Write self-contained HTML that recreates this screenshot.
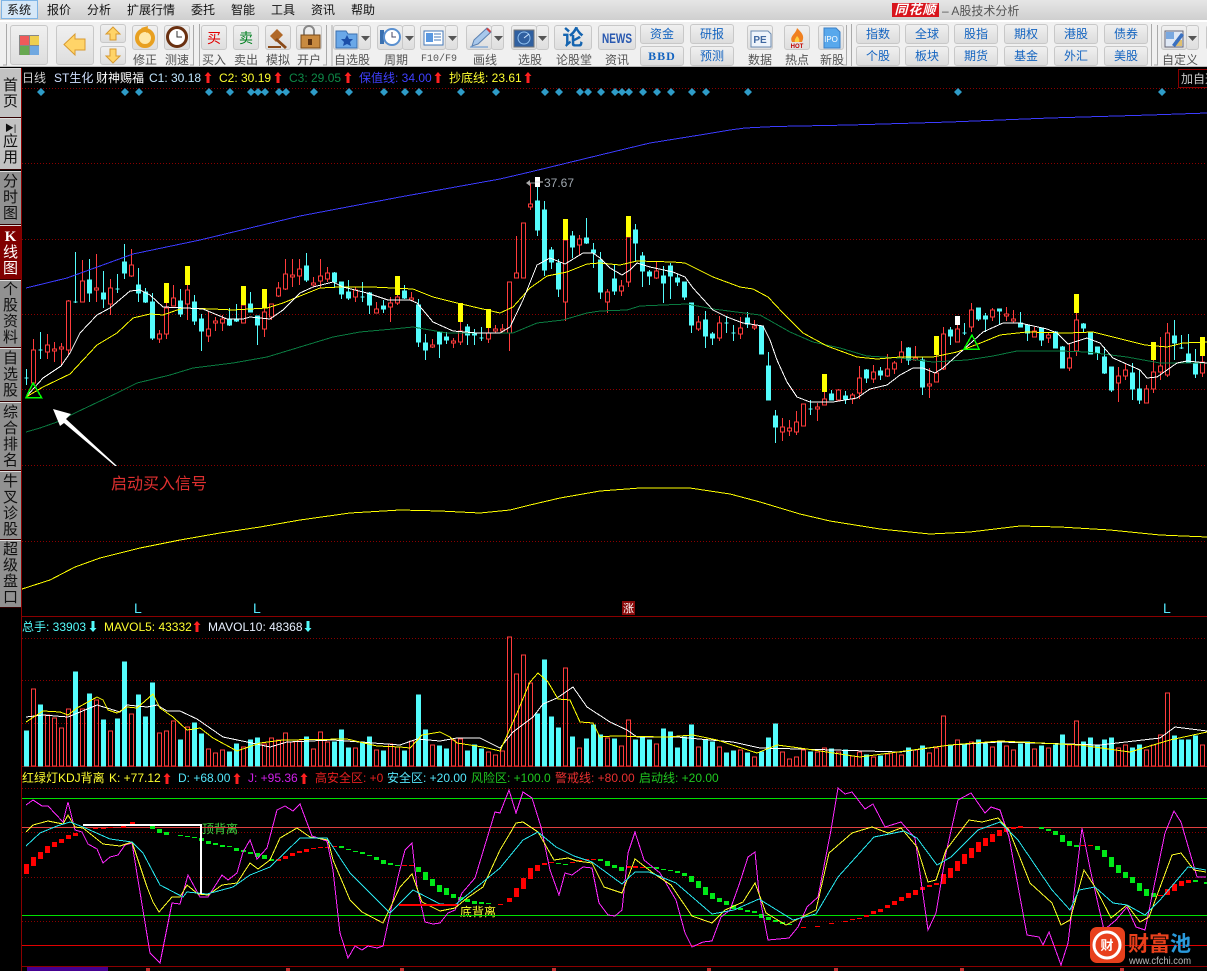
<!DOCTYPE html>
<html><head><meta charset="utf-8"><title>A股技术分析</title>
<style>
*{box-sizing:border-box}
html,body{margin:0;padding:0;width:1207px;height:971px;overflow:hidden;background:#000;font-family:"Liberation Sans","WenQuanYi Zen Hei","Noto Sans CJK SC",sans-serif;font-size:12px}
#menu{position:absolute;left:0;top:0;width:1207px;height:20px;background:linear-gradient(#e6e6e6,#cfcfcf)}
#menu span{position:absolute;top:2px;line-height:16px;color:#111;font-size:12px;white-space:nowrap}
#sys{position:absolute;left:1px;top:0;width:37px;height:19px;background:#d6e8f8;border:1px solid #7fb5e6}
#bar{position:absolute;left:0;top:20px;width:1207px;height:47px;background:#f0f0f0;border-top:2px solid #fff;border-bottom:1px solid #bbb}
.b{position:absolute;border:1px solid #c8c8c8;border-radius:3px;background:linear-gradient(#f0f0f0,#dedede)}
.t{position:absolute;color:#1464c0;text-align:center;font-size:12px;line-height:18px;height:20px;width:44px;border:1px solid #c8c8c8;border-radius:3px;background:linear-gradient(#f0f0f0,#dcdcdc)}
.l{position:absolute;top:53px;height:14px;line-height:14px;color:#555;text-align:center;font-size:12px;white-space:nowrap}
.s{position:absolute;left:0;width:21px;background:#919191;border-bottom:1px solid #300;border-top:1px solid #ddd;color:#111;font-size:15px;line-height:16px;text-align:center;display:flex;flex-direction:column;justify-content:center}
#title{position:absolute;left:942px;top:3px;color:#555;font-size:12px;line-height:16px}
#logo{position:absolute;left:892px;top:3px;width:47px;height:14px;background:#d8141c;color:#fff;font-weight:bold;font-style:italic;font-size:13px;line-height:14px;text-align:center;letter-spacing:1px}
#c{position:absolute;left:0;top:0}
</style></head><body>
<div id="menu"><div id="sys"></div>
<span style="left:7px">系统</span><span style="left:47px">报价</span><span style="left:87px">分析</span><span style="left:127px">扩展行情</span><span style="left:191px">委托</span><span style="left:231px">智能</span><span style="left:271px">工具</span><span style="left:311px">资讯</span><span style="left:351px">帮助</span>
<div id="logo">同花顺</div><div id="title">– A股技术分析</div></div>
<div id="bar"></div>
<div class="b" style="left:10px;top:25px;width:38px;height:40px"></div>
<div class="b" style="left:56px;top:25px;width:38px;height:40px"></div>
<div class="b" style="left:100px;top:24px;width:26px;height:19px"></div>
<div class="b" style="left:100px;top:46px;width:26px;height:19px"></div>
<div class="b" style="left:132px;top:25px;width:26px;height:25px"></div>
<div class="b" style="left:164px;top:25px;width:26px;height:25px"></div>
<div class="b" style="left:201px;top:25px;width:26px;height:25px"></div>
<div class="b" style="left:233px;top:25px;width:26px;height:25px"></div>
<div class="b" style="left:265px;top:25px;width:26px;height:25px"></div>
<div class="b" style="left:296px;top:25px;width:26px;height:25px"></div>
<div class="b" style="left:333px;top:25px;width:26px;height:25px"></div><div class="b" style="left:358px;top:25px;width:13px;height:25px"></div>
<div class="b" style="left:377px;top:25px;width:26px;height:25px"></div><div class="b" style="left:402px;top:25px;width:13px;height:25px"></div>
<div class="b" style="left:420px;top:25px;width:26px;height:25px"></div><div class="b" style="left:445px;top:25px;width:13px;height:25px"></div>
<div class="b" style="left:466px;top:25px;width:26px;height:25px"></div><div class="b" style="left:491px;top:25px;width:13px;height:25px"></div>
<div class="b" style="left:511px;top:25px;width:26px;height:25px"></div><div class="b" style="left:536px;top:25px;width:13px;height:25px"></div>
<div class="b" style="left:554px;top:25px;width:38px;height:25px"></div>
<div class="b" style="left:598px;top:25px;width:38px;height:25px"></div>
<div class="b" style="left:747px;top:25px;width:26px;height:25px"></div>
<div class="b" style="left:784px;top:25px;width:26px;height:25px"></div>
<div class="b" style="left:818px;top:25px;width:26px;height:25px"></div>
<div class="b" style="left:1161px;top:25px;width:26px;height:25px"></div><div class="b" style="left:1186px;top:25px;width:13px;height:25px"></div>
<div class="b" style="left:1206px;top:25px;width:6px;height:25px"></div>
<div class="t" style="left:640px;top:24px">资金</div><div class="t" style="left:640px;top:46px;font-family:'Liberation Serif',serif;font-weight:bold;letter-spacing:1px">BBD</div>
<div class="t" style="left:690px;top:24px">研报</div><div class="t" style="left:690px;top:46px">预测</div>
<div class="t" style="left:856px;top:24px">指数</div><div class="t" style="left:856px;top:46px">个股</div>
<div class="t" style="left:905px;top:24px">全球</div><div class="t" style="left:905px;top:46px">板块</div>
<div class="t" style="left:954px;top:24px">股指</div><div class="t" style="left:954px;top:46px">期货</div>
<div class="t" style="left:1004px;top:24px">期权</div><div class="t" style="left:1004px;top:46px">基金</div>
<div class="t" style="left:1054px;top:24px">港股</div><div class="t" style="left:1054px;top:46px">外汇</div>
<div class="t" style="left:1104px;top:24px">债券</div><div class="t" style="left:1104px;top:46px">美股</div>
<div class="l" style="left:130px;width:30px">修正</div><div class="l" style="left:162px;width:30px">测速</div>
<div class="l" style="left:199px;width:30px">买入</div><div class="l" style="left:231px;width:30px">卖出</div>
<div class="l" style="left:263px;width:30px">模拟</div><div class="l" style="left:294px;width:30px">开户</div>
<div class="l" style="left:332px;width:40px">自选股</div><div class="l" style="left:381px;width:30px">周期</div>
<div class="l" style="left:419px;width:40px;font-family:'Liberation Mono',monospace;font-size:10px">F10/F9</div>
<div class="l" style="left:470px;width:30px">画线</div><div class="l" style="left:515px;width:30px">选股</div>
<div class="l" style="left:554px;width:40px">论股堂</div><div class="l" style="left:602px;width:30px">资讯</div>
<div class="l" style="left:745px;width:30px">数据</div><div class="l" style="left:782px;width:30px">热点</div><div class="l" style="left:817px;width:30px">新股</div>
<div class="l" style="left:1160px;width:40px">自定义</div>
<div class="s" style="top:68px;height:50px;background:#c2c2c2;padding-top:2px">首<br>页</div>
<div class="s" style="top:118px;height:52px;background:#c2c2c2"><span style="font-size:9px;line-height:12px">▶|</span>应<br>用</div>
<div class="s" style="top:171px;height:54px">分<br>时<br>图</div>
<div class="s" style="top:225px;height:55px;background:#800000;color:#fff"><b style="font-family:'Liberation Serif',serif">K</b>线<br>图</div>
<div class="s" style="top:280px;height:68px">个<br>股<br>资<br>料</div>
<div class="s" style="top:348px;height:54px">自<br>选<br>股</div>
<div class="s" style="top:402px;height:69px">综<br>合<br>排<br>名</div>
<div class="s" style="top:471px;height:69px">牛<br>叉<br>诊<br>股</div>
<div class="s" style="top:540px;height:68px">超<br>级<br>盘<br>口</div>
<svg id="c" width="1207" height="971" viewBox="0 0 1207 971" font-family="'Liberation Sans','WenQuanYi Zen Hei','Noto Sans CJK SC',sans-serif" font-size="12">
<!-- toolbar separators -->
<g fill="none" stroke="#aaa"><path d="M6.5 24V65H3M193.5 25V65H190M199.5 24V66M326.5 25V65H323M332 25V66M846.5 25V65H843M851.5 24V66M1151.5 24V66M1157.5 25V65H1154" shape-rendering="crispEdges"/></g>
<!-- toolbar icons -->
<rect x="19" y="35" width="20" height="20" fill="#888"/><rect x="20" y="36" width="9" height="9" fill="#f05a5a"/><rect x="30" y="36" width="9" height="9" fill="#f0cf50"/><rect x="20" y="46" width="9" height="9" fill="#68a850"/><rect x="30" y="46" width="9" height="9" fill="#70a8e0"/>
<path d="M64 44.500L75 34V39H85V50H75V55Z" fill="#ffd468" stroke="#d89a30"/>
<path d="M113 27L120 34H116V40H110V34H106Z" fill="#ffd468" stroke="#d89a30"/><path d="M113 63L120 56H116V49H110V56H106Z" fill="#ffd468" stroke="#d89a30"/>
<circle cx="145" cy="38" r="8" fill="#ffe9a8" stroke="#e8a020" stroke-width="4"/><path d="M141 28l7-2-1 7z" fill="#e8a020"/>
<circle cx="177" cy="37" r="9.500" fill="#fff" stroke="#6a3010" stroke-width="3"/><path d="M177 31V37H182" stroke="#333" fill="none"/>
<text x="214" y="43" font-size="14" fill="#e00000" text-anchor="middle">买</text>
<text x="246" y="43" font-size="14" fill="#008020" text-anchor="middle">卖</text>
<path d="M270 36l7-7 6 6-7 7z" fill="#b06828"/><path d="M277 38l10 9-2 2-10-9z" fill="#8a4a18"/><rect x="268" y="46" width="13" height="2" fill="#8a4a18"/>
<path d="M304 35V31a5 5 0 0 1 10 0V35" fill="none" stroke="#888" stroke-width="2"/><rect x="301" y="35" width="19" height="13" fill="#c88a40" stroke="#7a4a18"/><rect x="308" y="39" width="4" height="6" fill="#5a3010"/>
<path d="M336 31h10l2 3h9v14h-21z" fill="#6aa8e8" stroke="#3a70b0"/><path d="M347 35l2 4h4l-3 3 1 4-4-2-4 2 1-4-3-3h4z" fill="#1c4fa8"/>
<rect x="380" y="30" width="4" height="14" fill="#3a70b0"/><circle cx="392" cy="37" r="8" fill="#fff" stroke="#5a90d0" stroke-width="2"/><path d="M392 32V37H396" stroke="#446" fill="none"/>
<rect x="424" y="31" width="19" height="14" fill="#fff" stroke="#4478b8"/><rect x="426" y="33" width="7" height="9" fill="#5a98e0"/><path d="M434 34h7M434 37h7M434 40h7" stroke="#4478b8"/>
<path d="M472 46l2-6 13-12 4 4-13 12z" fill="#a8c8ec" stroke="#5a80b0"/><path d="M486 29l4 4 1-2-3-3z" fill="#d04040"/><path d="M470 47h18" stroke="#5a90d0"/>
<rect x="514" y="30" width="20" height="17" fill="#3060a0" stroke="#777"/><circle cx="524" cy="38" r="6" fill="none" stroke="#8fc0f0"/><path d="M524 38l5-4" stroke="#cfe6ff"/>
<text x="573" y="45" font-size="21" font-weight="bold" fill="#1464b0" text-anchor="middle">论</text>
<text x="617" y="43" font-size="14" font-weight="bold" fill="#2858b0" text-anchor="middle" textLength="30" lengthAdjust="spacingAndGlyphs">NEWS</text>
<path d="M751 31h17l3 3v13h-20z" fill="#eef4fb" stroke="#6a8ab0"/><text x="760" y="43" font-size="10" font-weight="bold" fill="#4068a0" text-anchor="middle">PE</text>
<path d="M797 28c5 5 8 8 5 14h-10c-3-6 4-8 5-14z" fill="#f08020"/><path d="M797 36c2 2 3 4 2 6h-4c-1-2 1-4 2-6z" fill="#ffd040"/><text x="797" y="48" font-size="6" font-weight="bold" fill="#c00000" text-anchor="middle">HOT</text>
<path d="M824 28h12l4 4v16h-16z" fill="#58a8ec" stroke="#3a80c8"/><text x="831" y="42" font-size="8" fill="#fff" text-anchor="middle">IPO</text>
<rect x="1165" y="31" width="18" height="16" fill="#dfe8f5" stroke="#667"/><path d="M1166 32h8v7h-8z" fill="#7aa8e0"/><path d="M1175 40h7v6h-7z" fill="#e0c070"/><path d="M1172 45l9-12 3 2-9 12z" fill="#3a70c0"/>
<g fill="#555"><path d="M361 36h9l-4.500 5zM405 36h9l-4.500 5zM448 36h9l-4.500 5zM494 36h9l-4.500 5zM538 36h9l-4.500 5zM1188 36h9l-4.500 5z"/></g>

<!-- chart frame -->
<g shape-rendering="crispEdges">
<path d="M21.500 68V971M22 616.500H1207M22 766.500H1207M22 966.500H1207" stroke="#8a0000" fill="none"/>
<path d="M22 88.500H1207M22 163.500H1207M22 239.500H1207M22 314.500H1207M22 389.500H1207M22 465.500H1207M22 541.500H1207M22 638.500H1207M22 680.500H1207M22 723.500H1207M22 788.500H1207M22 832.500H1207M22 877.500H1207M22 921.500H1207" stroke="#8a0000" stroke-dasharray="1 2" fill="none"/>
<rect x="27" y="967" width="81" height="4" fill="#440090"/>
<path d="M146 968h4v3h-4zM286 968h4v3h-4zM400 968h4v3h-4zM552 968h4v3h-4zM707 968h4v3h-4zM834 968h4v3h-4zM960 968h4v3h-4zM1120 968h4v3h-4z" fill="#c03030"/>
<path d="M1178.500 87V69.500H1207" stroke="#8a0000" fill="none"/><path d="M1178 87.500H1207" stroke="#8a0000"/>
</g>
<text x="1181" y="83" fill="#c8c8c8">加自选</text>

<!-- diamonds -->
<path fill="#2e9cc8" d="M41 88l4 4-4 4-4-4zM125 88l4 4-4 4-4-4zM139 88l4 4-4 4-4-4zM209 88l4 4-4 4-4-4zM230 88l4 4-4 4-4-4zM251 88l4 4-4 4-4-4zM258 88l4 4-4 4-4-4zM265 88l4 4-4 4-4-4zM279 88l4 4-4 4-4-4zM286 88l4 4-4 4-4-4zM314 88l4 4-4 4-4-4zM349 88l4 4-4 4-4-4zM384 88l4 4-4 4-4-4zM405 88l4 4-4 4-4-4zM419 88l4 4-4 4-4-4zM461 88l4 4-4 4-4-4zM496 88l4 4-4 4-4-4zM545 88l4 4-4 4-4-4zM559 88l4 4-4 4-4-4zM580 88l4 4-4 4-4-4zM588 88l4 4-4 4-4-4zM601 88l4 4-4 4-4-4zM615 88l4 4-4 4-4-4zM622 88l4 4-4 4-4-4zM629 88l4 4-4 4-4-4zM643 88l4 4-4 4-4-4zM657 88l4 4-4 4-4-4zM671 88l4 4-4 4-4-4zM692 88l4 4-4 4-4-4zM706 88l4 4-4 4-4-4zM748 88l4 4-4 4-4-4zM958 88l4 4-4 4-4-4zM1162 88l4 4-4 4-4-4z"/>

<!-- legend -->
<g>
<text x="22" y="82" fill="#cfcfcf">日线</text><text x="54" y="82" fill="#cfe0ff">ST生化</text><text x="96" y="82" fill="#fff">财神赐福</text>
<text x="149" y="82" fill="#bfe6ff">C1: 30.18</text><text x="219" y="82" fill="#ffff30">C2: 30.19</text><text x="289" y="82" fill="#0e8a48">C3: 29.05</text>
<text x="359" y="82" fill="#4040ff">保值线: 34.00</text><text x="449" y="82" fill="#ffff30">抄底线: 23.61</text>
<text x="22" y="631" fill="#54fcfc">总手: 33903</text><text x="104" y="631" fill="#ffff30">MAVOL5: 43332</text><text x="208" y="631" fill="#e8f0ff">MAVOL10: 48368</text>
<text x="22" y="782" fill="#ffff30">红绿灯KDJ背离</text><text x="109" y="782" fill="#ffff30">K: +77.12</text><text x="178" y="782" fill="#54e8fc">D: +68.00</text><text x="248" y="782" fill="#d020e8">J: +95.36</text><text x="315" y="782" fill="#e82020">高安全区: +0</text><text x="387" y="782" fill="#54e8fc">安全区: +20.00</text><text x="471" y="782" fill="#20c820">风险区: +100.0</text><text x="555" y="782" fill="#e83030">警戒线: +80.00</text><text x="639" y="782" fill="#20c820">启动线: +20.00</text>
<text x="134" y="613" fill="#54e8fc" font-size="14">L</text><text x="253" y="613" fill="#54e8fc" font-size="14">L</text><text x="1163" y="613" fill="#54e8fc" font-size="14">L</text>
<rect x="622" y="601" width="13" height="14" fill="#8a0a0a"/><text x="623" y="612" fill="#fff" font-size="11">涨</text>
<text x="544" y="187" fill="#a0a8b0">37.67</text>
<text x="111" y="489" fill="#e03030" font-size="16">启动买入信号</text>
<text x="202" y="833" fill="#40d840" font-size="12">顶背离</text><text x="460" y="916" fill="#ffff30" font-size="12">底背离</text>
</g>
<path fill="#ff2020" d="M208 72l3.500 4H209.500V83H206.500V76H204.500zM278 72l3.500 4H279.500V83H276.500V76H274.500zM348 72l3.500 4H349.500V83H346.500V76H344.500zM438 72l3.500 4H439.500V83H436.500V76H434.500zM528 72l3.500 4H529.500V83H526.500V76H524.500zM197 621l3.500 4H198.500V632H195.500V625H193.500zM167 773l3.500 4H168.500V784H165.500V777H163.500zM237 773l3.500 4H238.500V784H235.500V777H233.500zM304 773l3.500 4H305.500V784H302.500V777H300.500z"/>
<path fill="#54fcfc" d="M93 632l3.500-4H94.500V621H91.500V628H89.500zM308 632l3.500-4H309.500V621H306.500V628H304.500z"/>

<!-- candles -->
<g shape-rendering="crispEdges">
<path fill="#54fcfc" stroke="#54fcfc" d="M26.500 369V385M24.500 378h4M40.500 332V359M38.500 350h4M75.500 252V303M73.500 302h4M89.500 259V302M87.500 280h4V293h-4zM103.500 271V308M101.500 293h4V299h-4zM117.500 274V293M115.500 289h4M124.500 244V279M122.500 262h4V273h-4zM138.500 268V302M136.500 285h4V293h-4zM145.500 288V303M143.500 292h4V302h-4zM152.500 293V340M150.500 302h4V338h-4zM180.500 289V317M178.500 301h4V314h-4zM194.500 295V325M192.500 302h4V321h-4zM201.500 314V351M199.500 319h4V331h-4zM229.500 308V326M227.500 320h4V325h-4zM236.500 304V322M234.500 319h4V321h-4zM250.500 292V312M248.500 304h4V312h-4zM257.500 316V345M255.500 316h4V325h-4zM306.500 253V282M304.500 266h4V280h-4zM334.500 272V288M332.500 273h4V282h-4zM341.500 282V299M339.500 282h4V294h-4zM348.500 280V300M346.500 292h4V298h-4zM362.500 282V302M360.500 297h4M369.500 292V314M367.500 293h4V305h-4zM383.500 300V313M381.500 306h4V309h-4zM404.500 285V299M402.500 291h4V298h-4zM418.500 299V347M416.500 305h4V342h-4zM425.500 334V360M423.500 343h4V350h-4zM439.500 332V358M437.500 332h4V344h-4zM446.500 332V344M444.500 337h4V340h-4zM467.500 324V345M465.500 327h4V335h-4zM474.500 329V345M472.500 333h4V335h-4zM481.500 327V341M479.500 338h4M537.500 187V236M535.500 201h4V230h-4zM544.500 201V276M542.500 210h4V270h-4zM551.500 247V269M549.500 250h4V262h-4zM558.500 259V297M556.500 263h4V289h-4zM572.500 231V258M570.500 236h4V247h-4zM586.500 218V244M584.500 238h4V243h-4zM593.500 243V268M591.500 250h4V253h-4zM600.500 252V299M598.500 260h4V292h-4zM614.500 264V295M612.500 279h4V291h-4zM635.500 224V262M633.500 230h4V243h-4zM642.500 252V287M640.500 256h4V271h-4zM649.500 270V285M647.500 272h4V276h-4zM663.500 266V303M661.500 276h4V283h-4zM670.500 263V299M668.500 266h4V276h-4zM677.500 274V286M675.500 278h4V282h-4zM684.500 282V300M682.500 282h4V297h-4zM691.500 303V333M689.500 303h4V325h-4zM705.500 311V348M703.500 320h4V336h-4zM712.500 332V345M710.500 334h4V338h-4zM726.500 316V333M724.500 323h4M733.500 325V341M731.500 333h4M747.500 312V328M745.500 318h4V324h-4zM761.500 326V354M759.500 326h4V354h-4zM768.500 352V400M766.500 366h4V400h-4zM775.500 410V443M773.500 416h4V427h-4zM810.500 400V415M808.500 409h4M831.500 390V400M829.500 394h4V400h-4zM845.500 391V404M843.500 396h4V399h-4zM866.500 369V383M864.500 370h4V378h-4zM880.500 367V380M878.500 371h4V375h-4zM908.500 347V365M906.500 348h4V360h-4zM922.500 357V395M920.500 360h4V387h-4zM950.500 327V345M948.500 330h4V336h-4zM964.500 323V335M962.500 333h4M978.500 308V321M976.500 308h4V319h-4zM985.500 313V332M983.500 316h4V319h-4zM999.500 309V324M997.500 309h4V311h-4zM1020.500 312V327M1018.500 323h4V327h-4zM1027.500 325V341M1025.500 325h4V333h-4zM1041.500 328V346M1039.500 328h4V340h-4zM1055.500 331V348M1053.500 332h4V348h-4zM1062.500 346V368M1060.500 347h4V368h-4zM1083.500 323V333M1081.500 324h4V328h-4zM1090.500 332V354M1088.500 333h4V354h-4zM1097.500 347V360M1095.500 347h4V353h-4zM1104.500 347V374M1102.500 357h4V373h-4zM1111.500 367V392M1109.500 367h4V390h-4zM1132.500 363V400M1130.500 373h4V389h-4zM1139.500 370V404M1137.500 389h4V400h-4zM1174.500 320V360M1172.500 336h4V343h-4zM1181.500 335V349M1179.500 348h4M1188.500 334V363M1186.500 354h4V363h-4zM1195.500 349V378M1193.500 363h4V374h-4z"/>
<path fill="none" stroke="#ff3c3c" d="M33.500 339V383M47.500 334V359M54.500 342V362M61.500 343V365M68.500 300V355M82.500 260V302M96.500 254V302M110.500 279V315M131.500 249V277M159.500 330V343M166.500 303V339M173.500 285V306M187.500 285V320M208.500 311V342M215.500 317V331M222.500 315V331M243.500 305V323M264.500 308V337M271.500 304V320M278.500 282V297M285.500 259V290M292.500 259V287M299.500 259V285M313.500 277V287M320.500 259V288M327.500 267V282M355.500 287V302M376.500 302V313M390.500 297V322M397.500 295V305M411.500 292V301M432.500 339V348M453.500 338V348M460.500 322V345M488.500 328V343M495.500 325V333M502.500 324V333M509.500 282V351M516.500 236V278M523.500 223V278M530.500 183V210M565.500 240V321M579.500 235V255M607.500 289V313M621.500 280V296M628.500 237V287M656.500 262V279M698.500 316V331M719.500 316V341M740.500 317V339M754.500 320V330M782.500 418V441M789.500 420V436M796.500 411V435M817.500 403V421M824.500 392V405M838.500 389V400M852.500 393V404M859.500 366V399M873.500 365V383M887.500 354V377M894.500 361V374M901.500 341V363M915.500 346V361M929.500 368V398M936.500 355V382M943.500 327V370M957.500 325V342M971.500 303V332M992.500 308V321M1006.500 307V321M1013.500 310V323M1034.500 327V337M1048.500 332V343M1069.500 344V371M1076.500 313V356M1118.500 367V402M1125.500 363V380M1146.500 385V403M1153.500 360V393M1160.500 337V380M1167.500 323V377M1202.500 356V377"/>
<path fill="#000" stroke="#ff3c3c" d="M31.500 350h4V383h-4zM45.500 345h4V352h-4zM52.500 349h4V351h-4zM59.500 347h4V349h-4zM66.500 301h4V350h-4zM80.500 281h4V302h-4zM94.500 288h4V290h-4zM108.500 288h4V304h-4zM129.500 265h4V276h-4zM157.500 334h4V339h-4zM164.500 308h4V334h-4zM171.500 298h4V306h-4zM185.500 290h4V304h-4zM206.500 329h4V336h-4zM213.500 321h4V323h-4zM220.500 319h4V323h-4zM241.500 305h4V323h-4zM262.500 312h4V329h-4zM269.500 304h4V317h-4zM276.500 288h4V296h-4zM283.500 274h4V289h-4zM290.500 275h4V277h-4zM297.500 269h4V276h-4zM311.500 283h4V285h-4zM318.500 276h4V281h-4zM325.500 273h4V279h-4zM353.500 290h4V297h-4zM374.500 309h4V313h-4zM388.500 303h4V307h-4zM395.500 297h4V303h-4zM409.500 298h4V300h-4zM430.500 345h4V347h-4zM451.500 341h4V343h-4zM458.500 331h4V342h-4zM486.500 333h4V339h-4zM493.500 329h4V331h-4zM500.500 329h4V331h-4zM507.500 282h4V333h-4zM514.500 273h4V278h-4zM521.500 223h4V278h-4zM528.500 204h4V207h-4zM563.500 240h4V302h-4zM577.500 239h4V245h-4zM605.500 292h4V302h-4zM619.500 286h4V291h-4zM626.500 237h4V282h-4zM654.500 271h4V278h-4zM696.500 322h4V329h-4zM717.500 323h4V338h-4zM738.500 328h4V334h-4zM752.500 326h4V328h-4zM780.500 427h4V432h-4zM787.500 428h4V431h-4zM794.500 422h4V432h-4zM801.500 404h4V426h-4zM815.500 407h4V409h-4zM822.500 399h4V405h-4zM836.500 390h4V400h-4zM850.500 395h4V399h-4zM857.500 378h4V393h-4zM871.500 372h4V379h-4zM885.500 369h4V376h-4zM892.500 363h4V369h-4zM899.500 352h4V358h-4zM913.500 358h4V360h-4zM927.500 384h4V386h-4zM934.500 373h4V382h-4zM941.500 334h4V369h-4zM955.500 329h4V342h-4zM969.500 310h4V327h-4zM990.500 310h4V317h-4zM1004.500 314h4V316h-4zM1011.500 319h4V321h-4zM1032.500 331h4V337h-4zM1046.500 335h4V338h-4zM1067.500 358h4V368h-4zM1074.500 320h4V351h-4zM1116.500 376h4V383h-4zM1123.500 370h4V376h-4zM1144.500 389h4V403h-4zM1151.500 372h4V389h-4zM1158.500 366h4V372h-4zM1165.500 333h4V375h-4zM1200.500 362h4V373h-4z"/>
<path fill="#ffff00" d="M164 283h5v20h-5zM185 266h5v19h-5zM241 286h5v19h-5zM262 289h5v19h-5zM395 276h5v19h-5zM458 303h5v19h-5zM486 309h5v19h-5zM563 219h5v21h-5zM626 216h5v21h-5zM822 374h5v18h-5zM934 336h5v19h-5zM1074 294h5v19h-5zM1151 342h5v18h-5zM1200 337h5v19h-5z"/>
<path fill="#fff" d="M535 177h5v10h-5zM955 316h5v9h-5z"/>
</g>
<path d="M530 183h5" stroke="#999"/><path d="M530 180v6l-4-3z" fill="#aaa"/><path d="M535 182h8" stroke="#ddd"/>

<!-- MA lines -->
<g fill="none" shape-rendering="crispEdges">
<path stroke="#3c3cff" d="M26 288L67 278L133 254L200 240L300 216L400 197L500 179L530 172L600 155L650 143L700 135L730 130L745 128L775 126.500L850 125L950 122L1050 118L1150 115L1207 113"/>
<path stroke="#0a7a40" d="M26 432L40 428L57 422L77 412L117 393L137 383L170 375L193 368L233 363L267 357L300 347L333 337L360 332L393 329L413 327L447 333L513 333L537 323L563 320L587 313L600 311L627 310L640 306L687 304L713 309L760 315L790 332L813 342L840 348L867 356L900 358L933 362L967 360L993 356L1017 351L1060 351L1087 352L1127 357L1160 363L1207 363"/>
<path stroke="#ffff00" d="M26 397L43 387L70 374L97 345L117 333L133 318L150 314L163 315L183 308L213 309L233 310L267 308L283 303L300 296L320 288L340 287L372 287L413 289L433 297L457 303L500 313L513 307L530 288L547 276L567 272L587 264L600 263L620 265L637 261L673 262L685 263L713 277L740 287L753 289L768 297L783 313L803 333L827 346L857 357L877 359L900 357L933 357L957 352L983 342L1000 335L1027 332L1067 333L1093 332L1117 338L1145 345L1167 347L1183 343L1207 342"/>
<path stroke="#fff" d="M26 397L43 378L61 366L70 353L80 333L97 315L110 308L130 291L140 290L150 295L163 307L187 308L203 309L227 319L243 319L250 317L270 319L283 310L300 293L313 287L333 282L343 287L367 293L388 300L410 300L417 303L433 322L453 331L477 333L500 333L510 327L523 300L537 265L550 258L565 264L583 253L593 253L600 258L610 268L622 275L630 270L637 263L650 267L673 272L685 277L693 288L713 310L727 317L743 323L763 326L770 340L777 360L787 382L797 397L810 402L833 402L857 398L870 389L887 385L900 375L913 368L923 368L935 373L943 368L963 350L983 332L1003 323L1020 323L1047 329L1057 333L1068 344L1087 338L1100 343L1113 358L1140 370L1147 378L1157 377L1177 363L1187 361L1207 363"/>
<path stroke="#ffff00" d="M22 589L50 580L75 567L100 558L140 548L180 540L220 533L260 527L300 520L350 513L400 510L440 511L480 513L510 510L530 505L560 498L600 491L640 488L690 488L730 494L760 502L800 514L830 521L880 529L930 534L970 532L1020 526L1060 527L1110 530L1160 535L1207 537"/>
<path stroke="#00ff00" stroke-width="1.500" d="M33 383L26 397.500H41.500Z"/><path stroke="#00ff00" stroke-width="1.500" d="M972 335L964 349H979Z"/>
</g>
<path fill="#fff" d="M53 409L71 414L66 419L117 466L115 466L64 423L60 426Z"/>

<!-- volume -->
<g shape-rendering="crispEdges">
<path fill="#54fcfc" stroke="#54fcfc" d="M24.500 731h4V766h-4zM38.500 705h4V766h-4zM73.500 672h4V766h-4zM87.500 694h4V766h-4zM101.500 720h4V766h-4zM115.500 719h4V766h-4zM122.500 662h4V766h-4zM136.500 695h4V766h-4zM143.500 717h4V766h-4zM150.500 683h4V766h-4zM178.500 740h4V766h-4zM192.500 723h4V766h-4zM199.500 734h4V766h-4zM227.500 752h4V766h-4zM234.500 744h4V766h-4zM248.500 740h4V766h-4zM255.500 738h4V766h-4zM304.500 737h4V766h-4zM332.500 742h4V766h-4zM339.500 730h4V766h-4zM346.500 748h4V766h-4zM360.500 742h4V766h-4zM367.500 737h4V766h-4zM381.500 751h4V766h-4zM402.500 751h4V766h-4zM416.500 695h4V766h-4zM423.500 730h4V766h-4zM437.500 746h4V766h-4zM444.500 749h4V766h-4zM465.500 751h4V766h-4zM472.500 745h4V766h-4zM479.500 749h4V766h-4zM535.500 714h4V766h-4zM542.500 660h4V766h-4zM549.500 717h4V766h-4zM556.500 728h4V766h-4zM570.500 737h4V766h-4zM584.500 739h4V766h-4zM591.500 725h4V766h-4zM598.500 735h4V766h-4zM612.500 739h4V766h-4zM633.500 740h4V766h-4zM640.500 738h4V766h-4zM647.500 740h4V766h-4zM661.500 729h4V766h-4zM668.500 732h4V766h-4zM675.500 748h4V766h-4zM682.500 737h4V766h-4zM689.500 725h4V766h-4zM703.500 740h4V766h-4zM710.500 742h4V766h-4zM724.500 753h4V766h-4zM731.500 751h4V766h-4zM745.500 753h4V766h-4zM759.500 752h4V766h-4zM766.500 738h4V766h-4zM773.500 724h4V766h-4zM808.500 752h4V766h-4zM829.500 749h4V766h-4zM843.500 750h4V766h-4zM864.500 755h4V766h-4zM878.500 756h4V766h-4zM906.500 748h4V766h-4zM920.500 746h4V766h-4zM948.500 745h4V766h-4zM962.500 744h4V766h-4zM976.500 740h4V766h-4zM983.500 744h4V766h-4zM997.500 743h4V766h-4zM1018.500 744h4V766h-4zM1025.500 742h4V766h-4zM1039.500 746h4V766h-4zM1053.500 745h4V766h-4zM1060.500 735h4V766h-4zM1081.500 742h4V766h-4zM1088.500 738h4V766h-4zM1095.500 745h4V766h-4zM1102.500 740h4V766h-4zM1109.500 738h4V766h-4zM1130.500 748h4V766h-4zM1137.500 745h4V766h-4zM1172.500 736h4V766h-4zM1179.500 740h4V766h-4zM1186.500 740h4V766h-4zM1193.500 736h4V766h-4z"/>
<path fill="none" stroke="#ff3c3c" d="M31.500 689h4V766h-4zM45.500 715h4V766h-4zM52.500 718h4V766h-4zM59.500 728h4V766h-4zM66.500 709h4V766h-4zM80.500 709h4V766h-4zM94.500 700h4V766h-4zM108.500 731h4V766h-4zM129.500 714h4V766h-4zM157.500 733h4V766h-4zM164.500 731h4V766h-4zM171.500 721h4V766h-4zM185.500 727h4V766h-4zM206.500 749h4V766h-4zM213.500 753h4V766h-4zM220.500 750h4V766h-4zM241.500 747h4V766h-4zM262.500 744h4V766h-4zM269.500 738h4V766h-4zM276.500 740h4V766h-4zM283.500 733h4V766h-4zM290.500 742h4V766h-4zM297.500 741h4V766h-4zM311.500 749h4V766h-4zM318.500 732h4V766h-4zM325.500 742h4V766h-4zM353.500 748h4V766h-4zM374.500 750h4V766h-4zM388.500 744h4V766h-4zM395.500 747h4V766h-4zM409.500 741h4V766h-4zM430.500 745h4V766h-4zM451.500 740h4V766h-4zM458.500 739h4V766h-4zM486.500 752h4V766h-4zM493.500 755h4V766h-4zM500.500 751h4V766h-4zM507.500 637h4V766h-4zM514.500 674h4V766h-4zM521.500 655h4V766h-4zM528.500 683h4V766h-4zM563.500 668h4V766h-4zM577.500 748h4V766h-4zM605.500 738h4V766h-4zM619.500 746h4V766h-4zM626.500 720h4V766h-4zM654.500 744h4V766h-4zM696.500 747h4V766h-4zM717.500 747h4V766h-4zM738.500 750h4V766h-4zM752.500 757h4V766h-4zM780.500 752h4V766h-4zM787.500 759h4V766h-4zM794.500 757h4V766h-4zM801.500 750h4V766h-4zM815.500 752h4V766h-4zM822.500 748h4V766h-4zM836.500 752h4V766h-4zM850.500 756h4V766h-4zM857.500 752h4V766h-4zM871.500 757h4V766h-4zM885.500 754h4V766h-4zM892.500 752h4V766h-4zM899.500 755h4V766h-4zM913.500 750h4V766h-4zM927.500 753h4V766h-4zM934.500 748h4V766h-4zM941.500 716h4V766h-4zM955.500 740h4V766h-4zM969.500 742h4V766h-4zM990.500 747h4V766h-4zM1004.500 746h4V766h-4zM1011.500 750h4V766h-4zM1032.500 749h4V766h-4zM1046.500 748h4V766h-4zM1067.500 745h4V766h-4zM1074.500 721h4V766h-4zM1116.500 748h4V766h-4zM1123.500 745h4V766h-4zM1144.500 750h4V766h-4zM1151.500 745h4V766h-4zM1158.500 735h4V766h-4zM1165.500 693h4V766h-4zM1200.500 745h4V766h-4z"/>
</g>
<g fill="none" shape-rendering="crispEdges">
<path stroke="#fff" d="M26 717L43 715L68 717L97 705L120 712L127 705L147 707L157 705L167 711L180 711L197 719L223 737L247 742L270 747L287 742L333 740L360 742L400 745L417 739L440 741L457 738L480 738L500 748L513 732L533 717L543 704L557 698L573 687L587 707L610 722L627 730L637 737L677 737L733 742L760 748L800 749L900 752L950 745L1000 742L1100 745L1160 738L1175 727L1207 731"/>
<path stroke="#ffff00" d="M26 722L43 711L60 712L68 715L77 708L97 697L103 700L108 710L117 713L127 707L137 708L153 694L160 708L173 717L187 730L200 728L213 738L237 751L260 743L283 740L347 739L377 746L400 747L410 748L422 735L440 732L450 737L457 743L483 747L500 751L517 713L530 682L538 673L548 682L558 699L570 700L580 722L593 723L600 737L613 736L667 737L693 735L717 740L757 753L777 745L800 748L860 757L950 745L1000 741L1080 745L1130 752L1170 740L1207 732"/>
</g>

<!-- KDJ -->
<g shape-rendering="crispEdges">
<path stroke="#00e000" d="M22 798.500H1207M22 915.500H1207" fill="none"/><path stroke="#e04040" d="M22 827.500H1207" fill="none"/><path stroke="#e00000" d="M22 945.500H1207" fill="none"/>
<path fill="#ff0000" d="M24 864h5v10h-5zM31 857h5v9h-5zM38 852h5v7h-5zM45 846h5v7h-5zM52 842h5v5h-5zM59 839h5v4h-5zM66 835h5v4h-5zM73 833h5v3h-5zM93 828h5v1h-5zM101 828h5v1h-5zM108 827h5v1h-5zM121 826h5v2h-5zM130 822h5v2h-5zM276 859h5v2h-5zM283 856h5v3h-5zM290 853h5v3h-5zM297 851h5v2h-5zM304 849h5v3h-5zM311 848h5v1h-5zM318 847h5v1h-5zM325 847h5v1h-5zM332 846h5v1h-5zM402 865h5v1h-5zM409 865h5v1h-5zM498 904h5v1h-5zM507 898h5v4h-5zM514 888h5v9h-5zM521 878h5v11h-5zM528 868h5v11h-5zM535 865h5v6h-5zM542 863h5v2h-5zM549 862h5v1h-5zM570 862h5v1h-5zM577 860h5v1h-5zM584 859h5v1h-5zM591 859h5v1h-5zM626 866h5v2h-5zM633 866h5v2h-5zM640 867h5v1h-5zM801 927h5v1h-5zM815 926h5v1h-5zM829 923h5v1h-5zM843 921h5v1h-5zM850 919h5v1h-5zM857 918h5v1h-5zM864 915h5v2h-5zM871 911h5v3h-5zM878 909h5v3h-5zM885 905h5v3h-5zM892 901h5v4h-5zM899 897h5v4h-5zM906 893h5v5h-5zM913 890h5v5h-5zM920 887h5v3h-5zM927 885h5v2h-5zM934 883h5v2h-5zM941 874h5v10h-5zM948 868h5v10h-5zM955 861h5v10h-5zM962 854h5v10h-5zM969 848h5v10h-5zM976 842h5v10h-5zM983 838h5v8h-5zM990 834h5v8h-5zM997 830h5v6h-5zM1004 828h5v4h-5zM1011 827h5v2h-5zM1018 826h5v2h-5zM1081 845h5v1h-5zM1088 845h5v1h-5zM1158 895h5v1h-5zM1165 889h5v6h-5zM1172 884h5v7h-5zM1179 881h5v5h-5zM1186 880h5v3h-5z"/>
<path fill="#00e818" d="M150 825h5v4h-5zM157 829h5v4h-5zM164 832h5v3h-5zM178 835h5v1h-5zM185 836h5v1h-5zM192 837h5v1h-5zM199 838h5v3h-5zM206 841h5v3h-5zM213 843h5v2h-5zM220 845h5v2h-5zM227 846h5v1h-5zM234 848h5v3h-5zM241 850h5v2h-5zM248 852h5v2h-5zM255 853h5v4h-5zM262 855h5v4h-5zM269 859h5v2h-5zM339 846h5v2h-5zM346 849h5v1h-5zM353 851h5v1h-5zM360 852h5v2h-5zM367 855h5v1h-5zM374 857h5v3h-5zM381 860h5v4h-5zM388 863h5v2h-5zM395 865h5v1h-5zM416 867h5v5h-5zM423 872h5v8h-5zM430 879h5v7h-5zM437 885h5v7h-5zM444 888h5v7h-5zM451 894h5v4h-5zM458 897h5v3h-5zM465 899h5v3h-5zM472 901h5v3h-5zM479 902h5v2h-5zM486 903h5v1h-5zM556 863h5v1h-5zM563 864h5v1h-5zM598 859h5v2h-5zM605 861h5v5h-5zM612 865h5v3h-5zM619 867h5v4h-5zM647 867h5v1h-5zM654 867h5v2h-5zM661 869h5v1h-5zM668 870h5v1h-5zM675 871h5v2h-5zM682 873h5v3h-5zM689 876h5v6h-5zM696 881h5v7h-5zM703 887h5v8h-5zM710 893h5v6h-5zM717 898h5v4h-5zM724 901h5v4h-5zM731 905h5v4h-5zM738 908h5v2h-5zM745 910h5v2h-5zM752 911h5v2h-5zM759 914h5v4h-5zM766 917h5v3h-5zM773 920h5v2h-5zM780 922h5v2h-5zM787 924h5v1h-5zM1039 827h5v2h-5zM1046 829h5v2h-5zM1053 831h5v4h-5zM1060 835h5v7h-5zM1067 841h5v5h-5zM1074 845h5v2h-5zM1095 846h5v4h-5zM1102 850h5v7h-5zM1109 857h5v10h-5zM1116 865h5v8h-5zM1123 872h5v6h-5zM1130 877h5v6h-5zM1137 883h5v8h-5zM1144 889h5v7h-5zM1151 893h5v4h-5zM1193 880h5v2h-5zM1204 882h3v2h-3z"/>
</g>
<g fill="none" shape-rendering="crispEdges">
<path stroke="#ff28ff" d="M26 805L33 800L42 806L48 806L63 822L68 802L75 830L82 832L88 844L97 849L103 863L110 857L118 855L125 845L132 843L138 880L150 953L157 960L160 963L172 903L180 904L188 875L200 897L208 897L222 875L228 880L237 873L243 852L250 840L257 859L267 848L277 810L285 806L293 811L300 804L312 836L327 841L333 870L340 933L348 958L355 946L362 950L368 946L377 948L383 946L398 877L405 850L412 843L417 887L425 922L433 924L440 923L448 913L455 910L462 893L475 878L495 812L500 813L509 790L516 813L523 792L532 798L541 827L550 870L559 895L565 873L572 875L583 867L592 868L599 903L608 915L615 916L622 910L628 853L635 832L644 860L660 873L676 900L685 933L692 947L703 942L712 941L721 917L730 910L739 885L748 857L755 852L759 893L768 940L789 938L798 927L807 907L818 897L831 830L838 788L845 794L852 792L865 809L873 804L885 827L901 822L915 838L928 930L936 913L946 853L958 800L971 793L985 813L991 807L1000 810L1009 837L1027 935L1039 937L1043 945L1049 932L1061 965L1068 943L1082 828L1091 873L1104 930L1116 920L1127 907L1136 927L1145 930L1165 833L1174 811L1181 822L1197 877L1206 877"/>
<path stroke="#ffff28" d="M26 832L33 825L48 821L63 824L68 815L75 827L83 828L103 844L120 846L132 842L147 887L153 902L159 912L172 897L180 897L187 885L198 894L208 895L222 885L237 883L250 863L258 869L270 860L280 838L297 828L310 837L328 840L333 860L350 900L362 912L383 923L400 887L412 874L422 902L440 911L455 908L467 898L483 887L500 850L509 835L516 823L523 822L538 832L554 860L568 858L577 861L592 863L604 887L622 893L635 859L653 873L671 885L692 916L712 923L725 910L743 902L755 883L766 913L786 925L816 910L829 853L852 833L872 827L888 833L901 828L917 847L928 882L936 880L946 850L969 820L982 822L998 818L1009 830L1030 883L1052 903L1061 925L1070 920L1084 870L1095 887L1111 918L1127 905L1140 922L1149 917L1172 855L1181 853L1194 870L1206 872"/>
<path stroke="#28e8f0" d="M26 846L40 833L57 826L70 822L83 827L110 839L132 842L143 853L160 885L183 897L187 892L207 894L233 887L250 875L270 867L300 838L327 838L350 873L390 913L413 890L440 904L455 905L500 868L523 840L538 832L556 847L574 856L592 862L622 884L635 872L649 872L676 883L712 914L734 910L759 899L793 920L816 914L838 877L874 837L904 831L917 838L937 865L951 857L978 830L1000 822L1018 840L1052 890L1070 910L1079 890L1095 887L1113 903L1127 905L1145 915L1160 900L1188 867L1206 870"/>
</g>
<g shape-rendering="crispEdges"><path d="M83 824h119v2H83zM200 824h2v70h-2z" fill="#fff"/><rect x="399" y="904" width="58" height="2" fill="#ff0000"/></g>

<!-- watermark -->
<rect x="1090" y="927" width="35" height="36" rx="7" fill="#e8401c"/><circle cx="1107" cy="945" r="13" fill="none" stroke="#fff" stroke-width="3"/><text x="1107" y="950" font-size="13" font-weight="bold" fill="#fff" text-anchor="middle">财</text>
<text x="1128" y="951" font-size="21" font-weight="bold" fill="#e8401c">财富</text><text x="1170" y="951" font-size="21" font-weight="bold" fill="#2a9adc">池</text>
<text x="1129" y="964" font-size="10" fill="#bbb" textLength="62" lengthAdjust="spacingAndGlyphs">www.cfchi.com</text>
</svg>
</body></html>
